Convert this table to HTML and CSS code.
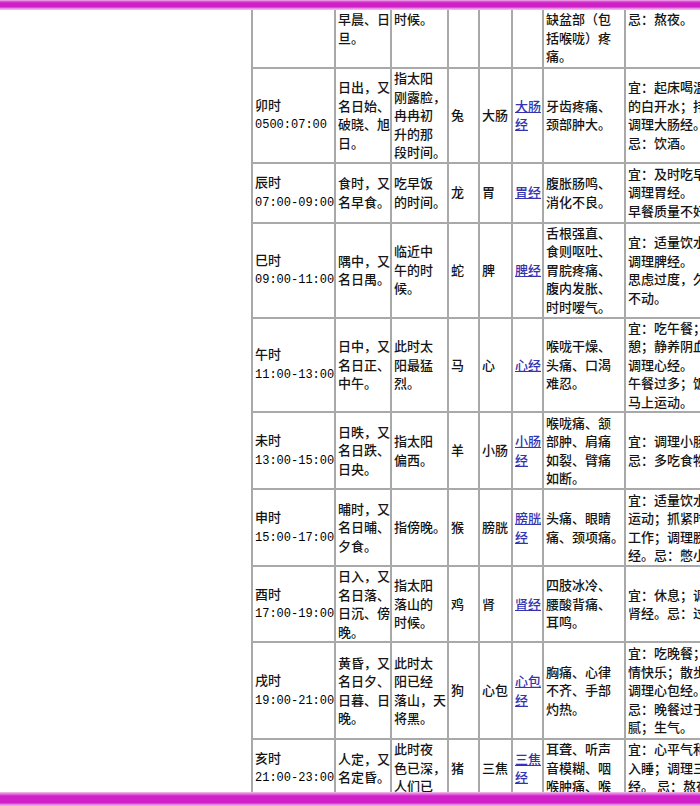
FILE: index.html
```html
<!DOCTYPE html>
<html lang="zh-CN">
<head>
<meta charset="utf-8">
<title>十二时辰养生表</title>
<link rel="stylesheet" href="styles.css">
</head>
<body>
<div class="frame">
  <div class="bar bar-top"></div>
  <div class="viewport">
    <table class="shichen">
      <colgroup>
        <col class="c-time"><col class="c-name"><col class="c-desc"><col class="c-animal"><col class="c-organ"><col class="c-meridian"><col class="c-symptom"><col class="c-advice">
      </colgroup>
      <tbody>
        <tr class="r-partial">
          <td></td>
          <td>早晨、日<br>旦。</td>
          <td>时候。</td>
          <td></td>
          <td></td>
          <td></td>
          <td>缺盆部（包<br>括喉咙）疼<br>痛。</td>
          <td>忌：熬夜。</td>
        </tr>
        <tr class="r-94">
          <td>卯时<br><span class="t">0500:07:00</span></td>
          <td>日出，又<br>名日始、<br>破晓、旭<br>日。</td>
          <td>指太阳<br>刚露脸，<br>冉冉初<br>升的那<br>段时间。</td>
          <td>兔</td>
          <td>大肠</td>
          <td><a href="#">大肠<br>经</a></td>
          <td>牙齿疼痛、<br>颈部肿大。</td>
          <td>宜：起床喝温<br>的白开水；排便<br>调理大肠经。<br>忌：饮酒。</td>
        </tr>
        <tr class="r-60">
          <td>辰时<br><span class="t">07:00-09:00</span></td>
          <td>食时，又<br>名早食。</td>
          <td>吃早饭<br>的时间。</td>
          <td>龙</td>
          <td>胃</td>
          <td><a href="#">胃经</a></td>
          <td>腹胀肠鸣、<br>消化不良。</td>
          <td>宜：及时吃早餐；<br>调理胃经。<br>早餐质量不好。</td>
        </tr>
        <tr class="r-95">
          <td>巳时<br><span class="t">09:00-11:00</span></td>
          <td>隅中，又<br>名日禺。</td>
          <td>临近中<br>午的时<br>候。</td>
          <td>蛇</td>
          <td>脾</td>
          <td><a href="#">脾经</a></td>
          <td>舌根强直、<br>食则呕吐、<br>胃脘疼痛、<br>腹内发胀、<br>时时嗳气。</td>
          <td>宜：适量饮水；<br>调理脾经。<br>思虑过度，久坐<br>不动。</td>
        </tr>
        <tr class="r-94">
          <td>午时<br><span class="t">11:00-13:00</span></td>
          <td>日中，又<br>名日正、<br>中午。</td>
          <td>此时太<br>阳最猛<br>烈。</td>
          <td>马</td>
          <td>心</td>
          <td><a href="#">心经</a></td>
          <td>喉咙干燥、<br>头痛、口渴<br>难忍。</td>
          <td>宜：吃午餐；小<br>憩；静养阴血；<br>调理心经。<br>午餐过多；饭后<br>马上运动。</td>
        </tr>
        <tr class="r-77">
          <td>未时<br><span class="t">13:00-15:00</span></td>
          <td>日昳，又<br>名日跌、<br>日央。</td>
          <td>指太阳<br>偏西。</td>
          <td>羊</td>
          <td>小肠</td>
          <td><a href="#">小肠<br>经</a></td>
          <td>喉咙痛、颔<br>部肿、肩痛<br>如裂、臂痛<br>如断。</td>
          <td>宜：调理小肠经。<br>忌：多吃食物。</td>
        </tr>
        <tr class="r-77">
          <td>申时<br><span class="t">15:00-17:00</span></td>
          <td>晡时，又<br>名日晡、<br>夕食。</td>
          <td>指傍晚。</td>
          <td>猴</td>
          <td>膀胱</td>
          <td><a href="#">膀胱<br>经</a></td>
          <td>头痛、眼睛<br>痛、颈项痛。</td>
          <td>宜：适量饮水；<br>运动；抓紧时间<br>工作；调理膀胱<br>经。忌：憋小便。</td>
        </tr>
        <tr class="r-76">
          <td>酉时<br><span class="t">17:00-19:00</span></td>
          <td>日入，又<br>名日落、<br>日沉、傍<br>晚。</td>
          <td>指太阳<br>落山的<br>时候。</td>
          <td>鸡</td>
          <td>肾</td>
          <td><a href="#">肾经</a></td>
          <td>四肢冰冷、<br>腰酸背痛、<br>耳鸣。</td>
          <td>宜：休息；调理<br>肾经。忌：过劳。</td>
        </tr>
        <tr class="r-97">
          <td>戌时<br><span class="t">19:00-21:00</span></td>
          <td>黄昏，又<br>名日夕、<br>日暮、日<br>晚。</td>
          <td>此时太<br>阳已经<br>落山，天<br>将黑。</td>
          <td>狗</td>
          <td>心包</td>
          <td><a href="#">心包<br>经</a></td>
          <td>胸痛、心律<br>不齐、手部<br>灼热。</td>
          <td>宜：吃晚餐；心<br>情快乐；散步；<br>调理心包经。<br>忌：晚餐过于油<br>腻；生气。</td>
        </tr>
        <tr class="r-last">
          <td>亥时<br><span class="t">21:00-23:00</span></td>
          <td>人定，又<br>名定昏。</td>
          <td>此时夜<br>色已深，<br>人们已</td>
          <td>猪</td>
          <td>三焦</td>
          <td><a href="#">三焦<br>经</a></td>
          <td>耳聋、听声<br>音模糊、咽<br>喉肿痛、喉</td>
          <td>宜：心平气和；<br>入睡；调理三焦<br>经。 忌：熬夜。</td>
        </tr>
      </tbody>
    </table>
  </div>
  <div class="bar bar-bottom"></div>
</div>
</body>
</html>
```
FILE: styles.css
```css
html, body {
  margin: 0;
  padding: 0;
  background: #ffffff;
  overflow: hidden;
}

.frame {
  width: 700px;
  height: 806px;
  display: flex;
  flex-direction: column;
  overflow: hidden;
  background: #ffffff;
}

.bar {
  flex: 0 0 auto;
  width: 100%;
}

.bar-top {
  height: 10px;
  background: linear-gradient(to bottom, #f4c4f0 0, #e060d8 1px, #cf1fc6 3px, #cf1fc6 7px, #e27ade 8px, #f3c8f0 10px);
}

.bar-bottom {
  height: 14px;
  background: linear-gradient(to bottom, #f2c2ee 0, #e070da 2px, #d020c8 4px, #d020c8 11px, #e070dc 12px, #f0b4ec 14px);
}

.viewport {
  flex: 1 1 auto;
  overflow: hidden;
  padding-left: 251px;
}

.shichen {
  table-layout: fixed;
  border-collapse: collapse;
  width: 583px;
  font-family: "Noto Sans CJK SC", sans-serif;
  font-size: 13px;
  font-weight: 500;
  line-height: 18.5px;
  color: #141414;
}

.c-time { width: 83px; }
.c-name { width: 56px; }
.c-desc { width: 57px; }
.c-animal { width: 31px; }
.c-organ { width: 33px; }
.c-meridian { width: 31px; }
.c-symptom { width: 82px; }
.c-advice { width: 210px; }

.shichen td {
  border: 2px solid #a9a9a9;
  padding: 0 1px 0 2px;
  vertical-align: middle;
  white-space: nowrap;
  overflow: hidden;
}

.shichen tr.r-partial td {
  border-top: none;
  vertical-align: top;
}

.r-partial { height: 58px; }
.r-94 { height: 94px; }
.r-60 { height: 60px; }
.r-95 { height: 95px; }
.r-77 { height: 77px; }
.r-76 { height: 76px; }
.r-97 { height: 97px; }
.r-last { height: 58px; }

.t {
  font-family: "Liberation Mono", monospace;
  font-size: 12px;
  font-weight: 400;
  color: #000000;
}

.shichen a {
  color: #3434b2;
  text-decoration: underline;
}
```
